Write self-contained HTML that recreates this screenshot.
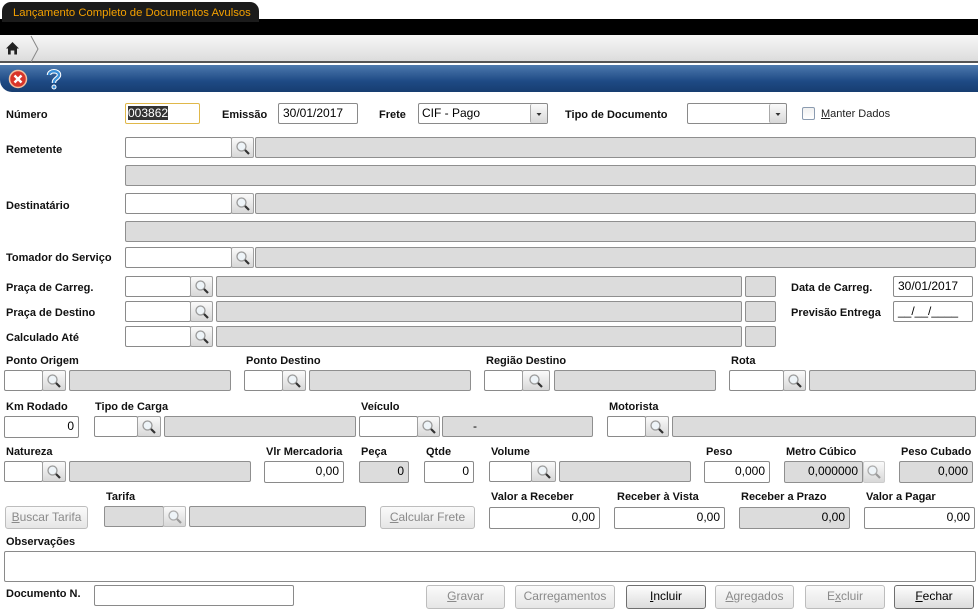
<!DOCTYPE html>
<html><head><meta charset="utf-8">
<style>
*{box-sizing:border-box;margin:0;padding:0}
body{width:978px;height:613px;background:#fff;font-family:"Liberation Sans",Arial,sans-serif;position:relative;overflow:hidden}
.a{position:absolute}
.l{position:absolute;font-size:11px;font-weight:bold;color:#111;white-space:nowrap;line-height:12px;margin-top:1px}
.i{position:absolute;border:1px solid #8a8a8a;background:#fff;font-size:12px;line-height:19px;padding:0 4px;text-align:right;color:#000;border-radius:2px}
.g{position:absolute;border:1px solid #8f8f8f;background:#dcdcdc;font-size:12px;line-height:19px;padding:0 4px;text-align:right;color:#000;border-radius:2px}
.s{position:absolute;border:1px solid #a0a0a0;background:linear-gradient(#fafafa,#d8d8d8);border-radius:2px}
.s svg{position:absolute;left:50%;top:50%;margin:-8px 0 0 -8px}
.bt{position:absolute;border:1px solid #bdbdbd;background:linear-gradient(#fafafa,#e6e6e6);border-radius:3px;font-size:12px;color:#8a8a8a;text-align:center;line-height:21px}
.bt.on{border-color:#6f6f6f;color:#000;background:linear-gradient(#fdfdfd,#dcdcdc)}
u{text-decoration:underline}
</style></head><body>
<!-- header -->
<div class="a" style="left:0;top:19px;width:978px;height:16px;background:#000"></div>
<div class="a" style="left:2px;top:2px;width:257px;height:20px;background:#1b1b1b;border-radius:9px 9px 0 0;color:#f3a000;font-size:11.3px;line-height:22px;padding-left:11px;">Lançamento Completo de Documentos Avulsos</div>
<div class="a" style="left:0;top:35px;width:978px;height:28px;background:linear-gradient(#f7f7f7,#dcdcdc);border-bottom:2px solid #555"></div>
<svg class="a" style="left:0;top:35px" width="45" height="28"><path d="M6 13.5 L12.5 7 L19 13.5 L17 13.5 L17 19.5 L14.3 19.5 L14.3 15.5 L10.7 15.5 L10.7 19.5 L8 19.5 L8 13.5Z" fill="#222"/><path d="M31 1 L38 14 L31 27" stroke="#888" fill="none"/></svg>
<div class="a" style="left:0;top:65px;width:978px;height:27px;background:linear-gradient(#4d79ad,#1e4a85 60%,#173d70);border-radius:0 0 0 12px"></div>
<svg class="a" style="left:8px;top:69px" width="20" height="20"><circle cx="10" cy="10" r="8.5" fill="#d8352a" stroke="#f3c0a0" stroke-width="1.5"/><path d="M6.5 6.5 L13.5 13.5 M13.5 6.5 L6.5 13.5" stroke="#fff" stroke-width="2.4"/></svg>
<svg class="a" style="left:45px;top:68px" width="18" height="22"><path d="M4 7 C4 2 14 2 14 7 C14 10 9 11 9 14 L9 15" stroke="#fff" stroke-width="4.5" fill="none"/><path d="M4 7 C4 2 14 2 14 7 C14 10 9 11 9 14 L9 15" stroke="#3a8fd8" stroke-width="2.4" fill="none"/><circle cx="9" cy="19" r="2" fill="#3a8fd8" stroke="#fff"/></svg>

<!-- row 1 -->
<div class="l" style="left:6px;top:108px">Número</div>
<div class="i" style="left:125px;top:103px;width:75px;height:21px;text-align:left;padding-left:2px;border-color:#e0b84a"><span style="background:#333;color:#fff">003862</span></div>
<div class="l" style="left:222px;top:108px">Emissão</div>
<div class="i" style="left:278px;top:103px;width:80px;height:21px;text-align:left">30/01/2017</div>
<div class="l" style="left:379px;top:108px">Frete</div>
<div class="i" style="left:418px;top:103px;width:130px;height:21px;text-align:left;padding-left:3px">CIF - Pago</div>
<div class="s" style="left:530px;top:104px;width:17px;height:19px;border:none;border-left:1px solid #aaa"><svg width="16" height="16"><path d="M5.5 7 L10.5 7 L8 10Z" fill="#333"/></svg></div>
<div class="l" style="left:565px;top:108px">Tipo de Documento</div>
<div class="i" style="left:687px;top:103px;width:100px;height:21px"></div>
<div class="s" style="left:769px;top:104px;width:17px;height:19px;border:none;border-left:1px solid #aaa"><svg width="16" height="16"><path d="M5.5 7 L10.5 7 L8 10Z" fill="#333"/></svg></div>
<div class="a" style="left:802px;top:107px;width:13px;height:13px;border:1px solid #8b9bb0;background:linear-gradient(#f0f0f0,#fff);border-radius:2px"></div>
<div class="a" style="left:821px;top:108px;font-size:11px;color:#222"><u>M</u>anter Dados</div>

<div class="l" style="left:6px;top:143px">Remetente</div>
<div class="i" style="left:125px;top:137px;width:107px;height:21px"></div>
<div class="s" style="left:231px;top:137px;width:23px;height:21px"><svg width="16" height="16"><circle cx="6.5" cy="6.5" r="4.5" fill="#eef4f8" stroke="#999" stroke-width="1.3"/><path d="M10 10 L14 14" stroke="#333" stroke-width="2.2"/></svg></div>
<div class="g" style="left:255px;top:137px;width:721px;height:21px"></div>
<div class="g" style="left:125px;top:165px;width:851px;height:21px"></div>

<div class="l" style="left:6px;top:199px">Destinatário</div>
<div class="i" style="left:125px;top:193px;width:107px;height:21px"></div>
<div class="s" style="left:231px;top:193px;width:23px;height:21px"><svg width="16" height="16"><circle cx="6.5" cy="6.5" r="4.5" fill="#eef4f8" stroke="#999" stroke-width="1.3"/><path d="M10 10 L14 14" stroke="#333" stroke-width="2.2"/></svg></div>
<div class="g" style="left:255px;top:193px;width:721px;height:21px"></div>
<div class="g" style="left:125px;top:221px;width:851px;height:21px"></div>

<div class="l" style="left:6px;top:251px">Tomador do Serviço</div>
<div class="i" style="left:125px;top:247px;width:107px;height:21px"></div>
<div class="s" style="left:231px;top:247px;width:23px;height:21px"><svg width="16" height="16"><circle cx="6.5" cy="6.5" r="4.5" fill="#eef4f8" stroke="#999" stroke-width="1.3"/><path d="M10 10 L14 14" stroke="#333" stroke-width="2.2"/></svg></div>
<div class="g" style="left:255px;top:247px;width:721px;height:21px"></div>

<!-- praça rows -->
<div class="l" style="left:6px;top:281px">Praça de Carreg.</div>
<div class="i" style="left:125px;top:276px;width:66px;height:21px"></div>
<div class="s" style="left:190px;top:276px;width:23px;height:21px"><svg width="16" height="16"><circle cx="6.5" cy="6.5" r="4.5" fill="#eef4f8" stroke="#999" stroke-width="1.3"/><path d="M10 10 L14 14" stroke="#333" stroke-width="2.2"/></svg></div>
<div class="g" style="left:216px;top:276px;width:526px;height:21px"></div>
<div class="g" style="left:745px;top:276px;width:31px;height:21px"></div>
<div class="l" style="left:791px;top:281px">Data de Carreg.</div>
<div class="i" style="left:893px;top:276px;width:80px;height:21px;text-align:left">30/01/2017</div>

<div class="l" style="left:6px;top:306px">Praça de Destino</div>
<div class="i" style="left:125px;top:301px;width:66px;height:21px"></div>
<div class="s" style="left:190px;top:301px;width:23px;height:21px"><svg width="16" height="16"><circle cx="6.5" cy="6.5" r="4.5" fill="#eef4f8" stroke="#999" stroke-width="1.3"/><path d="M10 10 L14 14" stroke="#333" stroke-width="2.2"/></svg></div>
<div class="g" style="left:216px;top:301px;width:526px;height:21px"></div>
<div class="g" style="left:745px;top:301px;width:31px;height:21px"></div>
<div class="l" style="left:791px;top:306px">Previsão Entrega</div>
<div class="i" style="left:893px;top:301px;width:80px;height:21px;text-align:left">__/__/____</div>

<div class="l" style="left:6px;top:331px">Calculado Até</div>
<div class="i" style="left:125px;top:326px;width:66px;height:21px"></div>
<div class="s" style="left:190px;top:326px;width:23px;height:21px"><svg width="16" height="16"><circle cx="6.5" cy="6.5" r="4.5" fill="#eef4f8" stroke="#999" stroke-width="1.3"/><path d="M10 10 L14 14" stroke="#333" stroke-width="2.2"/></svg></div>
<div class="g" style="left:216px;top:326px;width:526px;height:21px"></div>
<div class="g" style="left:745px;top:326px;width:31px;height:21px"></div>

<!-- ponto row -->
<div class="l" style="left:6px;top:354px">Ponto Origem</div>
<div class="l" style="left:246px;top:354px">Ponto Destino</div>
<div class="l" style="left:486px;top:354px">Região Destino</div>
<div class="l" style="left:731px;top:354px">Rota</div>
<div class="i" style="left:4px;top:370px;width:39px;height:21px"></div>
<div class="s" style="left:42px;top:370px;width:24px;height:21px"><svg width="16" height="16"><circle cx="6.5" cy="6.5" r="4.5" fill="#eef4f8" stroke="#999" stroke-width="1.3"/><path d="M10 10 L14 14" stroke="#333" stroke-width="2.2"/></svg></div>
<div class="g" style="left:69px;top:370px;width:162px;height:21px"></div>
<div class="i" style="left:244px;top:370px;width:39px;height:21px"></div>
<div class="s" style="left:282px;top:370px;width:24px;height:21px"><svg width="16" height="16"><circle cx="6.5" cy="6.5" r="4.5" fill="#eef4f8" stroke="#999" stroke-width="1.3"/><path d="M10 10 L14 14" stroke="#333" stroke-width="2.2"/></svg></div>
<div class="g" style="left:309px;top:370px;width:162px;height:21px"></div>
<div class="i" style="left:484px;top:370px;width:39px;height:21px"></div>
<div class="s" style="left:522px;top:370px;width:28px;height:21px"><svg width="16" height="16"><circle cx="6.5" cy="6.5" r="4.5" fill="#eef4f8" stroke="#999" stroke-width="1.3"/><path d="M10 10 L14 14" stroke="#333" stroke-width="2.2"/></svg></div>
<div class="g" style="left:554px;top:370px;width:162px;height:21px"></div>
<div class="i" style="left:729px;top:370px;width:55px;height:21px"></div>
<div class="s" style="left:783px;top:370px;width:23px;height:21px"><svg width="16" height="16"><circle cx="6.5" cy="6.5" r="4.5" fill="#eef4f8" stroke="#999" stroke-width="1.3"/><path d="M10 10 L14 14" stroke="#333" stroke-width="2.2"/></svg></div>
<div class="g" style="left:809px;top:370px;width:167px;height:21px"></div>

<!-- km row -->
<div class="l" style="left:6px;top:400px">Km Rodado</div>
<div class="l" style="left:95px;top:400px">Tipo de Carga</div>
<div class="l" style="left:361px;top:400px">Veículo</div>
<div class="l" style="left:609px;top:400px">Motorista</div>
<div class="i" style="left:4px;top:416px;width:75px;height:22px">0</div>
<div class="i" style="left:94px;top:416px;width:44px;height:21px"></div>
<div class="s" style="left:137px;top:416px;width:24px;height:21px"><svg width="16" height="16"><circle cx="6.5" cy="6.5" r="4.5" fill="#eef4f8" stroke="#999" stroke-width="1.3"/><path d="M10 10 L14 14" stroke="#333" stroke-width="2.2"/></svg></div>
<div class="g" style="left:164px;top:416px;width:192px;height:21px"></div>
<div class="i" style="left:359px;top:416px;width:59px;height:21px"></div>
<div class="s" style="left:417px;top:416px;width:23px;height:21px"><svg width="16" height="16"><circle cx="6.5" cy="6.5" r="4.5" fill="#eef4f8" stroke="#999" stroke-width="1.3"/><path d="M10 10 L14 14" stroke="#333" stroke-width="2.2"/></svg></div>
<div class="g" style="left:442px;top:416px;width:151px;height:21px;text-align:left;padding-left:30px">-</div>
<div class="i" style="left:607px;top:416px;width:39px;height:21px"></div>
<div class="s" style="left:645px;top:416px;width:24px;height:21px"><svg width="16" height="16"><circle cx="6.5" cy="6.5" r="4.5" fill="#eef4f8" stroke="#999" stroke-width="1.3"/><path d="M10 10 L14 14" stroke="#333" stroke-width="2.2"/></svg></div>
<div class="g" style="left:672px;top:416px;width:304px;height:21px"></div>

<!-- natureza row -->
<div class="l" style="left:6px;top:445px">Natureza</div>
<div class="l" style="left:266px;top:445px">Vlr Mercadoria</div>
<div class="l" style="left:361px;top:445px">Peça</div>
<div class="l" style="left:426px;top:445px">Qtde</div>
<div class="l" style="left:491px;top:445px">Volume</div>
<div class="l" style="left:706px;top:445px">Peso</div>
<div class="l" style="left:786px;top:445px">Metro Cúbico</div>
<div class="l" style="left:901px;top:445px">Peso Cubado</div>
<div class="i" style="left:4px;top:461px;width:39px;height:21px"></div>
<div class="s" style="left:42px;top:461px;width:24px;height:21px"><svg width="16" height="16"><circle cx="6.5" cy="6.5" r="4.5" fill="#eef4f8" stroke="#999" stroke-width="1.3"/><path d="M10 10 L14 14" stroke="#333" stroke-width="2.2"/></svg></div>
<div class="g" style="left:69px;top:461px;width:182px;height:21px"></div>
<div class="i" style="left:264px;top:461px;width:80px;height:22px">0,00</div>
<div class="g" style="left:359px;top:461px;width:50px;height:22px">0</div>
<div class="i" style="left:424px;top:461px;width:50px;height:22px">0</div>
<div class="i" style="left:489px;top:461px;width:43px;height:21px"></div>
<div class="s" style="left:531px;top:461px;width:25px;height:21px"><svg width="16" height="16"><circle cx="6.5" cy="6.5" r="4.5" fill="#eef4f8" stroke="#999" stroke-width="1.3"/><path d="M10 10 L14 14" stroke="#333" stroke-width="2.2"/></svg></div>
<div class="g" style="left:559px;top:461px;width:132px;height:21px"></div>
<div class="i" style="left:704px;top:461px;width:66px;height:22px">0,000</div>
<div class="g" style="left:784px;top:461px;width:79px;height:22px">0,000000</div>
<div class="s" style="left:863px;top:461px;width:22px;height:22px;border-color:#ccc"><svg width="16" height="16"><circle cx="6.5" cy="6.5" r="4.5" fill="#eef4f8" stroke="#aaa" stroke-width="1.3"/><path d="M10 10 L14 14" stroke="#999" stroke-width="2.2"/></svg></div>
<div class="g" style="left:899px;top:461px;width:74px;height:22px">0,000</div>

<!-- tarifa row -->
<div class="l" style="left:106px;top:490px">Tarifa</div>
<div class="l" style="left:491px;top:490px">Valor a Receber</div>
<div class="l" style="left:617px;top:490px">Receber à Vista</div>
<div class="l" style="left:741px;top:490px">Receber a Prazo</div>
<div class="l" style="left:866px;top:490px">Valor a Pagar</div>
<div class="bt" style="left:5px;top:506px;width:83px;height:23px"><u>B</u>uscar Tarifa</div>
<div class="g" style="left:104px;top:506px;width:60px;height:21px"></div>
<div class="s" style="left:163px;top:506px;width:23px;height:21px;border-color:#bbb"><svg width="16" height="16"><circle cx="6.5" cy="6.5" r="4.5" fill="#eef4f8" stroke="#aaa" stroke-width="1.3"/><path d="M10 10 L14 14" stroke="#999" stroke-width="2.2"/></svg></div>
<div class="g" style="left:189px;top:506px;width:177px;height:21px"></div>
<div class="bt" style="left:380px;top:506px;width:95px;height:23px"><u>C</u>alcular Frete</div>
<div class="i" style="left:489px;top:507px;width:111px;height:22px">0,00</div>
<div class="i" style="left:614px;top:507px;width:111px;height:22px">0,00</div>
<div class="g" style="left:739px;top:507px;width:111px;height:22px">0,00</div>
<div class="i" style="left:864px;top:507px;width:111px;height:22px">0,00</div>

<div class="l" style="left:6px;top:535px">Observações</div>
<div class="i" style="left:4px;top:551px;width:972px;height:31px"></div>

<div class="l" style="left:6px;top:587px">Documento N.</div>
<div class="i" style="left:94px;top:585px;width:200px;height:21px"></div>
<div class="bt" style="left:426px;top:585px;width:79px;height:24px"><u>G</u>ravar</div>
<div class="bt" style="left:515px;top:585px;width:100px;height:24px">Carregamentos</div>
<div class="bt on" style="left:626px;top:585px;width:80px;height:24px"><u>I</u>ncluir</div>
<div class="bt" style="left:715px;top:585px;width:79px;height:24px"><u>A</u>gregados</div>
<div class="bt" style="left:805px;top:585px;width:80px;height:24px">E<u>x</u>cluir</div>
<div class="bt on" style="left:894px;top:585px;width:80px;height:24px"><u>F</u>echar</div>
</body></html>
